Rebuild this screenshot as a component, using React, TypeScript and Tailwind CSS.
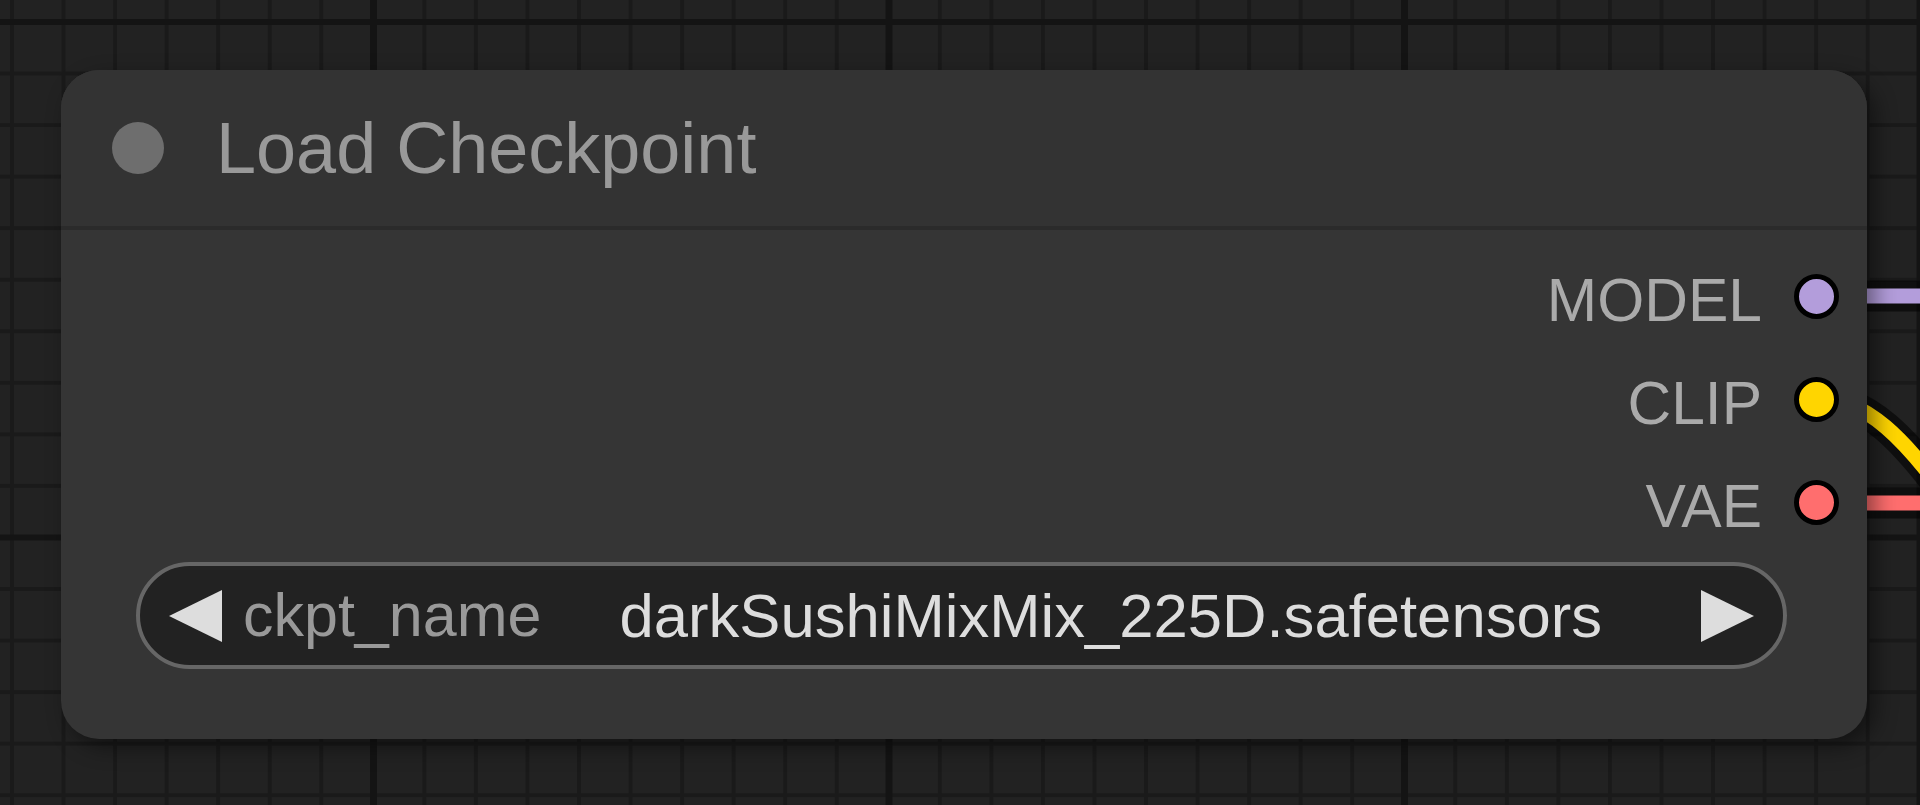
import React from "react";

function Triangle({ dir }: { dir: "left" | "right" }) {
  return (
    <svg width="53" height="52" viewBox="0 0 53 52" className="shrink-0">
      {dir === "left" ? (
        <polygon points="0,26 53,0 53,52" fill="#dddddd" />
      ) : (
        <polygon points="0,0 53,26 0,52" fill="#dddddd" />
      )}
    </svg>
  );
}

function Slot({ label, color }: { label: string; color: string }) {
  return (
    <div className="flex h-[103px] items-center justify-end gap-[32px] pr-[28px]">
      <span className="mt-[7px] text-[60.5px] leading-none text-[#aaaaaa]">{label}</span>
      <div
        className={`h-[45px] w-[45px] rounded-full border-[5px] border-black ${color}`}
      />
    </div>
  );
}

function Wires() {
  return (
    <svg
      className="pointer-events-none absolute inset-0"
      width="1920"
      height="805"
      viewBox="0 0 1920 805"
    >
      <g fill="none" strokeLinecap="round">
        <path d="M1820 296 L1940 296" stroke="rgba(0,0,0,0.55)" strokeWidth="31" />
        <path d="M1816 399 C1860 399, 1900 420, 1990 560" stroke="rgba(0,0,0,0.55)" strokeWidth="31" />
        <path d="M1820 503 L1940 503" stroke="rgba(0,0,0,0.55)" strokeWidth="31" />
        <path d="M1820 296 L1940 296" stroke="#b39ddb" strokeWidth="15" />
        <path d="M1820 503 L1940 503" stroke="#ff6e6e" strokeWidth="15" />
        <path d="M1816 399 C1860 399, 1900 420, 1990 560" stroke="#ffd500" strokeWidth="15" />
      </g>
    </svg>
  );
}

export default function App() {
  return (
    <div
      className="relative h-[805px] w-[1920px] overflow-hidden bg-[#222222] pl-[61px] pt-[70px] [background-image:linear-gradient(90deg,#141414_7px,transparent_7px),linear-gradient(180deg,#141414_6px,transparent_6px),linear-gradient(90deg,#1a1a1a_4px,transparent_4px),linear-gradient(180deg,#1a1a1a_4px,transparent_4px)] [background-size:515.5px_515.5px,515.5px_515.5px,51.55px_51.55px,51.55px_51.55px] [background-position:370px_19px,370px_19px,10px_20px,10px_20px]"
      style={{ fontFamily: '"Liberation Sans", Arial, sans-serif' }}
    >
      <Wires />
      <div className="relative z-10 flex h-[669px] w-[1806px] flex-col overflow-hidden rounded-[38px] bg-[#353535] shadow-[8px_8px_22px_rgba(0,0,0,0.45)]">
        <div className="flex h-[160px] shrink-0 items-center border-b-4 border-[#2b2b2b] bg-[#333333] pl-[51px]">
          <div className="h-[52px] w-[52px] rounded-full bg-[#6e6e6e]" />
          <span className="ml-[52px] text-[72px] leading-none text-[#999999]">
            Load Checkpoint
          </span>
        </div>
        <div className="flex flex-1 flex-col pt-[15px]">
          <Slot label="MODEL" color="bg-[#b39ddb]" />
          <Slot label="CLIP" color="bg-[#ffd500]" />
          <Slot label="VAE" color="bg-[#ff6e6e]" />
          <div className="ml-[75px] mt-[8px] flex h-[107px] w-[1651px] items-center rounded-full border-4 border-[#666666] bg-[#222222] pl-[29px] pr-[29px]">
            <Triangle dir="left" />
            <span className="ml-[21px] text-[61px] leading-none text-[#999999]">ckpt_name</span>
            <span className="mr-[99px] flex-1 text-right text-[61.6px] leading-none text-[#dddddd]">
              darkSushiMixMix_225D.safetensors
            </span>
            <Triangle dir="right" />
          </div>
        </div>
      </div>
    </div>
  );
}
